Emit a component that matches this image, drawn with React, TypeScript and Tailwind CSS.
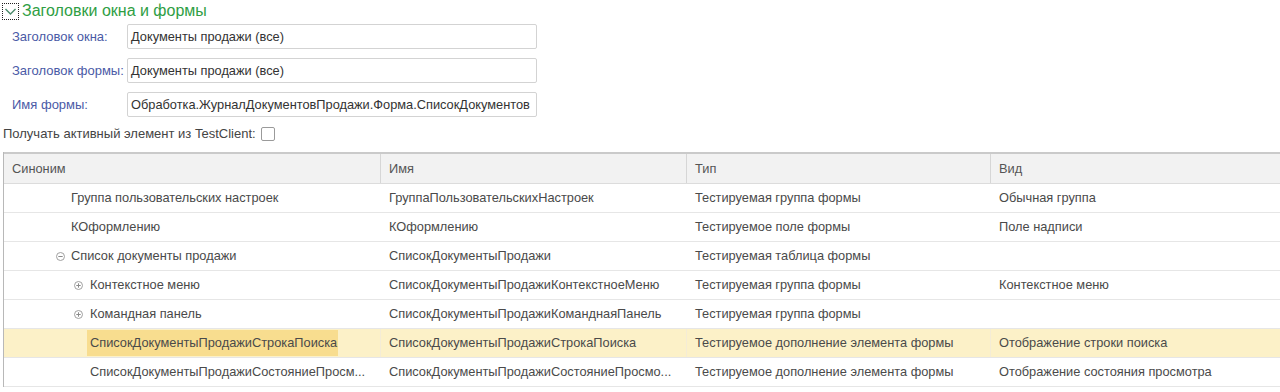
import React from "react";

type Row = {
  syn: string;
  indent: number;
  icon?: "minus" | "plus";
  iconX?: number;
  name: string;
  type: string;
  kind: string;
  hl?: boolean;
};

const rows: Row[] = [
  { syn: "Группа пользовательских настроек", indent: 70, name: "ГруппаПользовательскихНастроек", type: "Тестируемая группа формы", kind: "Обычная группа" },
  { syn: "КОформлению", indent: 70, name: "КОформлению", type: "Тестируемое поле формы", kind: "Поле надписи" },
  { syn: "Список документы продажи", indent: 70, icon: "minus", iconX: 52, name: "СписокДокументыПродажи", type: "Тестируемая таблица формы", kind: "" },
  { syn: "Контекстное меню", indent: 89, icon: "plus", iconX: 70, name: "СписокДокументыПродажиКонтекстноеМеню", type: "Тестируемая группа формы", kind: "Контекстное меню" },
  { syn: "Командная панель", indent: 89, icon: "plus", iconX: 70, name: "СписокДокументыПродажиКоманднаяПанель", type: "Тестируемая группа формы", kind: "" },
  { syn: "СписокДокументыПродажиСтрокаПоиска", indent: 89, name: "СписокДокументыПродажиСтрокаПоиска", type: "Тестируемое дополнение элемента формы", kind: "Отображение строки поиска", hl: true },
  { syn: "СписокДокументыПродажиСостояниеПросм...", indent: 89, name: "СписокДокументыПродажиСостояниеПросмо...", type: "Тестируемое дополнение элемента формы", kind: "Отображение состояния просмотра" },
];

function TreeIcon({ kind }: { kind: "minus" | "plus" }) {
  return (
    <svg width="9" height="9" viewBox="0 0 9 9" className="block">
      <circle cx="4.5" cy="4.5" r="4" fill="none" stroke="#a0a0a0" strokeWidth="1" />
      <line x1="2.3" y1="4.5" x2="6.7" y2="4.5" stroke="#8a8a8a" strokeWidth="1" />
      {kind === "plus" && <line x1="4.5" y1="2.3" x2="4.5" y2="6.7" stroke="#8a8a8a" strokeWidth="1" />}
    </svg>
  );
}

function Field({ label, value }: { label: string; value: string }) {
  return (
    <div className="flex items-center h-[25px]">
      <div className="w-[127px] pl-[12px] text-[13px] text-[#4a5aa6] whitespace-nowrap">{label}</div>
      <div className="w-[410px] h-[25px] border border-[#d3d3d3] rounded-[2px] bg-white flex items-center pl-[3px] text-[12.8px] text-[#333] whitespace-nowrap overflow-hidden">
        {value}
      </div>
    </div>
  );
}

export default function App() {
  return (
    <div className="w-[1280px] h-[392px] bg-white overflow-hidden font-['Liberation_Sans',Arial,sans-serif]">
      <div className="h-[22px] flex items-center pl-[2px]">
        <div className="w-[17px] h-[17px] border border-dotted border-[#222] flex items-center justify-center">
          <svg width="13" height="9" viewBox="0 0 13 9">
            <polyline points="1.5,2 6.5,7 11.5,2" fill="none" stroke="#4a8a6a" strokeWidth="1.4" />
          </svg>
        </div>
        <span className="ml-[3px] text-[16px] text-[#2f9e44] leading-none">Заголовки окна и формы</span>
      </div>

      <div className="mt-[2px] flex flex-col gap-[9px]">
        <Field label="Заголовок окна:" value="Документы продажи (все)" />
        <Field label="Заголовок формы:" value="Документы продажи (все)" />
        <Field label="Имя формы:" value="Обработка.ЖурналДокументовПродажи.Форма.СписокДокументов" />
      </div>

      <div className="mt-[8px] h-[18px] flex items-center pl-[3px] text-[13px] text-[#444]">
        <span>Получать активный элемент из TestClient:</span>
        <span className="ml-[5px] w-[14px] h-[14px] border border-[#9a9a9a] rounded-[2px] bg-white" />
      </div>

      <div className="mt-[9px] ml-[3px] border-l border-[#b8b8b8] text-[12.8px] text-[#4a4a4a]">
        <div className="flex h-[32px] bg-[#f2f2f2] border-t-2 border-[#cacaca] border-b border-b-[#dcdcdc] text-[#555]">
          <div className="w-[377px] flex items-center pl-[8px] border-r border-[#d6d6d6]">Синоним</div>
          <div className="w-[306px] flex items-center pl-[8px] border-r border-[#d6d6d6]">Имя</div>
          <div className="w-[304px] flex items-center pl-[8px] border-r border-[#d6d6d6]">Тип</div>
          <div className="flex-1 flex items-center pl-[8px]">Вид</div>
        </div>
        {rows.map((r, i) => (
          <div
            key={i}
            className={`flex h-[29px] border-b border-[#e6e6e6] ${r.hl ? "bg-[#fcf1c8]" : "bg-white"}`}
          >
            <div className={`w-[377px] relative flex items-center whitespace-nowrap ${r.hl ? "border-r border-[#f4ecd6]" : ""}`}>
              {r.icon && (
                <span className="absolute top-[10px]" style={{ left: r.iconX }}>
                  <TreeIcon kind={r.icon} />
                </span>
              )}
              <span
                className={`h-[26px] flex items-center ${r.hl ? "bg-[#f8dd8f] pl-[3px] pr-[1px]" : ""}`}
                style={{ marginLeft: r.hl ? r.indent - 6 : r.indent - 3 }}
              >
                {r.syn}
              </span>
            </div>
            <div className={`w-[306px] flex items-center pl-[8px] whitespace-nowrap overflow-hidden ${r.hl ? "border-r border-[#f4ecd6]" : ""}`}>{r.name}</div>
            <div className={`w-[304px] flex items-center pl-[8px] whitespace-nowrap ${r.hl ? "border-r border-[#f4ecd6]" : ""}`}>{r.type}</div>
            <div className="flex-1 flex items-center pl-[8px] whitespace-nowrap">{r.kind}</div>
          </div>
        ))}
      </div>
    </div>
  );
}
